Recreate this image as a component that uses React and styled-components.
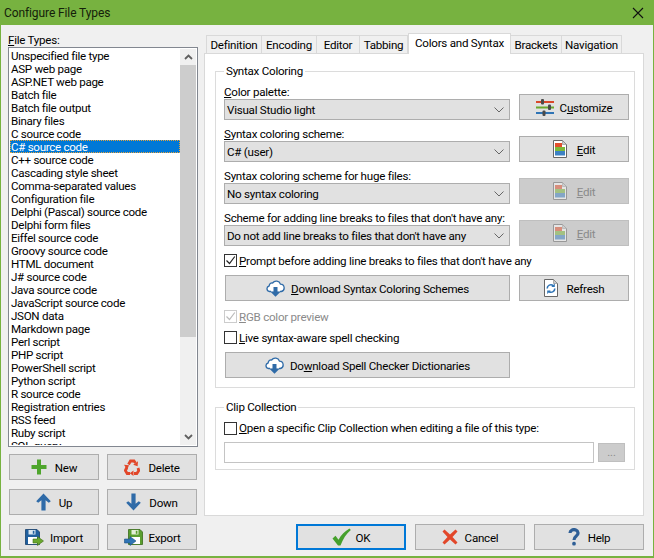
import React from "react";
import styled, { createGlobalStyle } from "styled-components";

const Global = createGlobalStyle`
  html, body { margin: 0; padding: 0; background: #f0f0f0; }
  body { font-family: Roboto, "Open Sans", sans-serif; font-size: 12px; color: #000; }
  #root { width: 654px; height: 558px; overflow: hidden; }
  * { box-sizing: border-box; }
`;

const Window = styled.div`
  width: 654px; height: 558px; display: flex; flex-direction: column;
  background: #f0f0f0; border: 1px solid #77b240; border-top: 0; border-bottom-width: 2px;
`;
const TitleBar = styled.div`
  height: 25px; margin: 0 -1px; padding: 0 10px 0 4px; flex: none;
  display: flex; align-items: center; justify-content: space-between;
  background: #77b240; font-size: 12px; letter-spacing: -0.1px; color: #14210a;
`;
const Label = styled.span`
  font-size: 11.6px; letter-spacing: -0.25px; line-height: 14px; white-space: nowrap;
  color: ${p => (p.$off ? "#8a8a8a" : "#000")};
`;
const BtnLabel = styled(Label)` padding-top: 2px; `;
const Body = styled.div`
  flex: 1; display: flex; padding: 8px 9px 6px 7px; gap: 6px; min-height: 0;
`;
const Left = styled.div` width: 190px; display: flex; flex-direction: column; `;
const ListLabel = styled(Label)` height: 14px; display: block; `;
const ListFrame = styled.div`
  height: 400px; display: flex; border: 1px solid #828790; background: #fff; padding: 1px;
`;
const ListItems = styled.div` flex: 1; overflow: hidden; `;
const Item = styled.div`
  height: 13px; line-height: 15px; padding-left: 1px; font-size: 11.6px; letter-spacing: -0.3px; white-space: nowrap;
  ${p => p.$sel && `background:#0078d7;color:#fff;outline:1px dotted #e8a33a;outline-offset:-1px;`}
`;
const Scrollbar = styled.div` width: 16px; display: flex; flex-direction: column; background: #f0f0f0; `;
const ScrollArrow = styled.div` height: 16px; flex: none; display: flex; align-items: center; justify-content: center; `;
const ScrollThumb = styled.div` height: 272px; background: #cdcdcd; `;
const ScrollGap = styled.div` flex: 1; `;
const LeftButtons = styled.div`
  display: grid; grid-template-columns: 90px 90px; column-gap: 8px; row-gap: 9px;
  margin: 7px 0 0 1px;
`;
const Btn = styled.div`
  height: 26px; display: flex; align-items: center; justify-content: center; gap: ${p => p.$gap ?? 8}px;
  background: ${p => (p.$off ? "#cccccc" : "#e1e1e1")};
  border: ${p => (p.$primary ? "2px solid #0078d7" : `1px solid ${p.$off ? "#bfbfbf" : "#adadad"}`)};
  width: ${p => (p.$w ? `${p.$w}px` : "auto")};
  flex: none;
`;
const Right = styled.div` flex: 1; display: flex; flex-direction: column; min-width: 0; `;
const TabBar = styled.div` height: 20px; display: flex; align-items: flex-end; padding-left: 2px; flex: none; `;
const Tab = styled.div`
  width: ${p => p.$w}px; height: 18px; display: flex; align-items: center; justify-content: center;
  background: #f0f0f0;
  border: 1px solid #d9d9d9; border-left-width: 0; border-bottom: 0;
  &:first-child { border-left-width: 1px; }
  ${p => p.$active && `background:#fff;border-left-width:1px;margin-bottom:-1px;height:21px;position:relative;z-index:1;padding-bottom:3px;`}
`;
const Panel = styled.div`
  height: 463px; background: #fff; border: 1px solid #d9d9d9; padding: 10px 8px 0 10px;
  display: flex; flex-direction: column; gap: 12px;
`;
const Group = styled.fieldset`
  margin: 0; padding: 0 5px 0 8px; border: 1px solid #dcdcdc; height: ${p => p.$h}px; min-width: 0;
  display: block;
`;
const Legend = styled.legend` padding: 0 2px; margin-left: 0; font-size: 11.6px; letter-spacing: -0.25px; line-height: 14px; `;
const Field = styled.div`
  display: flex; align-items: flex-end; justify-content: space-between; height: 42px;
`;
const FieldMain = styled.div` width: 286px; display: flex; flex-direction: column; `;
const FieldLabel = styled(Label)` display: block; height: 17px; line-height: 14px; padding-top: 3px; `;
const Select = styled.div`
  height: 21px; border: 1px solid #adadad; background: #e1e1e1; display: flex; align-items: center;
  justify-content: space-between; padding: 0 5px 0 2px;
`;
const ChoiceRow = styled.div`
  display: flex; align-items: center; gap: 2px; height: ${p => p.$h ?? 21}px;
  margin-top: ${p => p.$mt ?? 0}px; margin-bottom: ${p => p.$mb ?? 0}px;
`;
const Box = styled.div`
  width: 13px; height: 13px; border: 1px solid ${p => (p.$off ? "#cccccc" : "#333")}; background: #fff; flex: none;
  display: flex; align-items: center; justify-content: center;
`;
const ActionRow = styled.div` display: flex; justify-content: space-between; margin-left: 1px; `;
const ClipRow = styled.div` display: flex; align-items: center; gap: 4px; `;
const TextInput = styled.div` width: 370px; height: 21px; border: 1px solid #c4c4c4; background: #fff; `;
const Dots = styled.div`
  width: 27px; height: 19px; background: #cccccc; border: 1px solid #bfbfbf; color: #8a8a8a;
  display: flex; align-items: center; justify-content: center; font-size: 11px;
`;
const Footer = styled.div` display: flex; justify-content: flex-end; gap: 9px; margin-top: 8px; `;

const items = ["Unspecified file type","ASP web page","ASP.NET web page","Batch file","Batch file output","Binary files","C source code","C# source code","C++ source code","Cascading style sheet","Comma-separated values","Configuration file","Delphi (Pascal) source code","Delphi form files","Eiffel source code","Groovy source code","HTML document","J# source code","Java source code","JavaScript source code","JSON data","Markdown page","Perl script","PHP script","PowerShell script","Python script","R source code","Registration entries","RSS feed","Ruby script","SQL query"];

const Chev = ({ up }) => (
  <svg width="9" height="6" viewBox="0 0 9 6"><path d={up ? "M1 5l3.5-3.5L8 5" : "M1 1l3.5 3.5L8 1"} fill="none" stroke="#606060" strokeWidth="1.8" /></svg>
);
const SelChev = () => (
  <svg width="10" height="6" viewBox="0 0 10 6"><path d="M.5.5L5 5 9.5.5" fill="none" stroke="#666" strokeWidth="1" /></svg>
);
const Plus = () => (
  <svg width="16" height="16" viewBox="0 0 16 16"><path d="M6 .5h4v5.500h5.500v4H10v5.500H6V10H.5V6H6z" fill="#4ea52c" /></svg>
);
const Recycle = () => (
  <svg width="16" height="17" viewBox="0 0 16 17" fill="none" stroke="#e2472a" strokeWidth="2.800">
    <path d="M4.500 5.500L6.500 2h3.500l1.500 2" /><path d="M14 9l.8 2.500-2 3H10" /><path d="M6 14.500H3.200L1.300 11.500 2.800 8.500" />
    <path d="M14 2.200l-.4 5-4.400-1.400z" fill="#e2472a" stroke="none" /><path d="M9.500 11.500v5.500l-3.800-2.800z" fill="#e2472a" stroke="none" /><path d="M0 5.800l5 .4-1.800 4.600z" fill="#e2472a" stroke="none" />
  </svg>
);
const Arrow = ({ down }) => (
  <svg width="15" height="18" viewBox="0 0 15 18"><path transform={down ? "rotate(180 7.5 9)" : undefined} d="M7.500.5L14.800 8.200 12.800 9.800 9.600 7.200V17.500H5.400V7.200L2.200 9.800.2 8.200z" fill="#2f6ba8" /></svg>
);
const ImportIcon = () => (
  <svg width="19" height="17" viewBox="0 0 19 17">
    <path d="M.5.5h11.500l2.500 2.500v12.500H.5z" fill="#1f5f9e" stroke="#163f6a" strokeWidth=".8" />
    <rect x="3.500" y="1" width="7" height="4.500" fill="#d9e6f0" /><rect x="7.800" y="1.800" width="1.600" height="3" fill="#1f5f9e" />
    <rect x="3" y="8" width="9" height="7" fill="#fff" />
    <path d="M12.500 7.500l6 4.500-6 4.500v-2.500H8v-4h4.500z" fill="#6aa82e" stroke="#3f6f1a" strokeWidth=".6" />
  </svg>
);
const ExportIcon = () => (
  <svg width="19" height="17" viewBox="0 0 19 17">
    <path d="M4.500.5h11.500l2.500 2.500v12.500h-14z" fill="#5a9e2f" stroke="#3a6c1c" strokeWidth=".8" />
    <rect x="7.500" y="1" width="7" height="4.500" fill="#e4efd8" /><rect x="11.800" y="1.800" width="1.600" height="3" fill="#5a9e2f" />
    <rect x="7" y="8" width="9" height="7" fill="#fff" />
    <path d="M6 7.500l6 4.500-6 4.500V14H.5v-4H6z" fill="#2f74b5" stroke="#1f4f80" strokeWidth=".6" />
  </svg>
);
const Sliders = () => (
  <svg width="18" height="17" viewBox="0 0 18 17">
    <rect y="2" width="18" height="2" fill="#d9482a" /><rect y="7.500" width="18" height="2" fill="#6aa82e" /><rect y="13" width="18" height="2" fill="#2f74b5" />
    <rect x="5" y="0" width="3" height="5.500" rx="1" fill="#4a4a4a" /><rect x="12" y="5.500" width="3" height="5.500" rx="1" fill="#4a4a4a" /><rect x="6.500" y="11.500" width="3" height="5.500" rx="1" fill="#4a4a4a" />
  </svg>
);
const Doc = ({ off }) => (
  <svg width="14" height="18" viewBox="0 0 14 18" opacity={off ? 0.5 : 1}>
    <path d="M.5.500h9l4 4v13H.5z" fill="#fff" stroke="#666" />
    <path d="M9.500.500v4h4z" fill="#ccc" stroke="#888" strokeWidth=".6" />
    <rect x="2" y="3" width="7" height="4" fill="#e2502c" /><rect x="2" y="7" width="10" height="4" fill="#7cb83a" /><rect x="2" y="11" width="10" height="4.500" fill="#3d82c4" />
  </svg>
);
const RefreshDoc = () => (
  <svg width="14" height="18" viewBox="0 0 14 18">
    <path d="M.5.500h9l4 4v13H.5z" fill="#fff" stroke="#666" />
    <path d="M9.500.500v4h4z" fill="#ccc" stroke="#888" strokeWidth=".6" />
    <path d="M3.200 9.500a3.600 3.600 0 0 1 6-2.800M10.800 9.500a3.600 3.600 0 0 1-6 2.800" fill="none" stroke="#2f74b5" strokeWidth="1.600" />
    <path d="M10.800 4.500v3.500H7.300zM3.200 15v-3.500h3.500z" fill="#2f74b5" />
  </svg>
);
const Cloud = () => (
  <svg width="19" height="17" viewBox="0 0 19 17">
    <path d="M5 11.500H3.500a2.800 2.800 0 0 1-.4-5.500C3.500 3.800 5 2.800 6.600 3a4.500 4.500 0 0 1 7.900 1.200 3.700 3.700 0 0 1 .8 7.300H14" fill="#fff" stroke="#2f6ba8" strokeWidth="1.300" />
    <path d="M7.500 7h4v4.500h3.300L9.500 16.800 4.200 11.500h3.300z" fill="#2f6ba8" />
  </svg>
);
const Check = () => (
  <svg width="19" height="18" viewBox="0 0 19 18"><path d="M.5 10.500l3-2.800 3 4C9 7 13 3 17.500.5L18.800 2C14 6 11 11 8.500 17.500H6z" fill="#45a02c" /></svg>
);
const Cross = () => (
  <svg width="16" height="16" viewBox="0 0 16 16"><path d="M.5 2.500L2.500.5 8 5.500 13.500.5l2 2L10.500 8l5 5.500-2 2L8 10.500l-5.500 5-2-2L5.500 8z" fill="#e2472a" /></svg>
);
const HelpIcon = () => (
  <svg width="12" height="18" viewBox="0 0 12 18">
    <path d="M2 5a4 3.500 0 1 1 6.500 2.800C7 9 6 9.500 6 12" fill="none" stroke="#2f5f96" strokeWidth="3.200" /><rect x="4.200" y="13.800" width="3.600" height="3.600" rx="1.500" fill="#2f5f96" />
  </svg>
);
const CloseX = () => (
  <svg width="12" height="12" viewBox="0 0 12 12"><path d="M1 1l10 10M11 1L1 11" stroke="#111" strokeWidth="1.100" /></svg>
);
const Tick = ({ off }) => (
  <svg width="11" height="11" viewBox="0 0 11 11"><path d="M1.500 5.500l3 3L9.800 1.500" fill="none" stroke={off ? "#bbb" : "#222"} strokeWidth="1.200" /></svg>
);

const B = ({ icon, children, ...rest }) => (
  <Btn {...rest}>{icon}<BtnLabel $off={rest.$off}>{children}</BtnLabel></Btn>
);

const Row = ({ label, value, icon, btn, off }) => (
  <Field>
    <FieldMain>
      <FieldLabel>{label}</FieldLabel>
      <Select><Label>{value}</Label><SelChev /></Select>
    </FieldMain>
    <B icon={icon} $w={110} $off={off} $gap={btn === "Customize" ? 6 : 10}>{btn === "Customize" ? <>C<u>u</u>stomize</> : <><u>E</u>dit</>}</B>
  </Field>
);

export default function App() {
  return (
    <Window>
      <Global />
      <TitleBar><span>Configure File Types</span><CloseX /></TitleBar>
      <Body>
        <Left>
          <ListLabel><u>F</u>ile Types:</ListLabel>
          <ListFrame>
            <ListItems>
              {items.map(t => <Item key={t} $sel={t === "C# source code"}>{t}</Item>)}
            </ListItems>
            <Scrollbar>
              <ScrollArrow><Chev up /></ScrollArrow>
              <ScrollThumb />
              <ScrollGap />
              <ScrollArrow><Chev /></ScrollArrow>
            </Scrollbar>
          </ListFrame>
          <LeftButtons>
            <B icon={<Plus />}>New</B>
            <B icon={<Recycle />}>Delete</B>
            <B icon={<Arrow />}>Up</B>
            <B icon={<Arrow down />}>Down</B>
            <B icon={<ImportIcon />} $gap={6}>Import</B>
            <B icon={<ExportIcon />} $gap={6}>Export</B>
          </LeftButtons>
        </Left>
        <Right>
          <TabBar>
            <Tab $w={56}><Label>Definition</Label></Tab>
            <Tab $w={55}><Label>Encoding</Label></Tab>
            <Tab $w={43}><Label>Editor</Label></Tab>
            <Tab $w={48}><Label>Tabbing</Label></Tab>
            <Tab $w={103} $active><Label>Colors and Syntax</Label></Tab>
            <Tab $w={51}><Label>Brackets</Label></Tab>
            <Tab $w={60}><Label>Navigation</Label></Tab>
          </TabBar>
          <Panel>
            <Group $h={324}>
              <Legend>Syntax Coloring</Legend>
              <Row label={<><u>C</u>olor palette:</>} value="Visual Studio light" icon={<Sliders />} btn="Customize" />
              <Row label={<><u>S</u>yntax coloring scheme:</>} value="C# (user)" icon={<Doc />} btn="Edit" />
              <Row label="Syntax coloring scheme for huge files:" value="No syntax coloring" icon={<Doc off />} btn="Edit" off />
              <Row label="Scheme for adding line breaks to files that don't have any:" value="Do not add line breaks to files that don't have any" icon={<Doc off />} btn="Edit" off />
              <ChoiceRow $h={29}><Box><Tick /></Box><Label><u>P</u>rompt before adding line breaks to files that don't have any</Label></ChoiceRow>
              <ActionRow>
                <B icon={<Cloud />} $w={285} $gap={6}><u>D</u>ownload Syntax Coloring Schemes</B>
                <B icon={<RefreshDoc />} $w={110} $gap={9}>Refresh</B>
              </ActionRow>
              <ChoiceRow $h={21} $mt={5}><Box $off><Tick off /></Box><Label $off><u>R</u>GB color preview</Label></ChoiceRow>
              <ChoiceRow $h={21} $mb={4}><Box /><Label><u>L</u>ive syntax-aware spell checking</Label></ChoiceRow>
              <ActionRow>
                <B icon={<Cloud />} $w={285} $gap={6}>Do<u>w</u>nload Spell Checker Dictionaries</B>
              </ActionRow>
            </Group>
            <Group $h={70}>
              <Legend>Clip Collection</Legend>
              <ChoiceRow $h={28}><Box /><Label><u>O</u>pen a specific Clip Collection when editing a file of this type:</Label></ChoiceRow>
              <ClipRow><TextInput /><Dots>...</Dots></ClipRow>
            </Group>
          </Panel>
          <Footer>
            <B icon={<Check />} $w={110} $primary $gap={5}>OK</B>
            <B icon={<Cross />} $w={110} $gap={7}>Cancel</B>
            <B icon={<HelpIcon />} $w={110}>Help</B>
          </Footer>
        </Right>
      </Body>
    </Window>
  );
}
